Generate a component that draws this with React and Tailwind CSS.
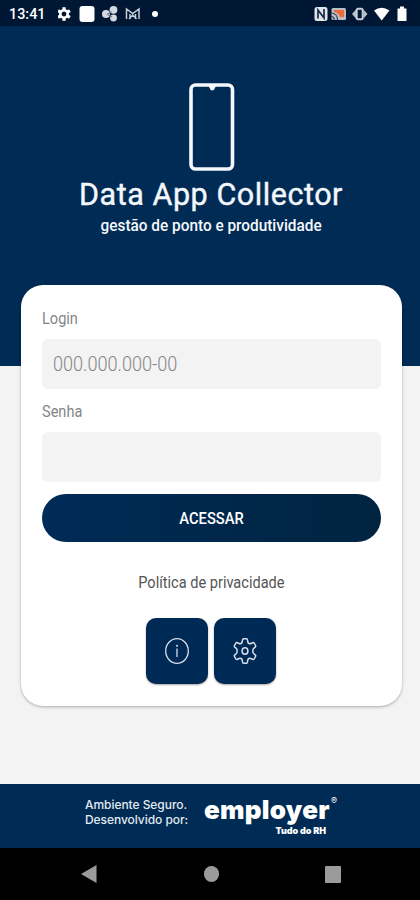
import { useState } from 'react';

function StatusBar() {
  return (
    <div className="flex h-[26px] items-center bg-[#001733] pl-[9px] text-white">
      <span className="w-[49px] origin-left translate-y-px scale-x-[0.96] text-[15px] leading-none font-medium">13:41</span>
      <svg className="h-[26px] w-[110px]" viewBox="0 0 110 26">
        <g transform="translate(6 14)" fill="#fff">
          <circle r="3.700" fill="none" stroke="#fff" strokeWidth="2.6" />
          {[0, 60, 120, 180, 240, 300].map((angle) => (
            <rect key={angle} x="-1.6" y="-6.800" width="3.200" height="3" transform={`rotate(${angle})`} />
          ))}
        </g>
        <rect x="21.5" y="6" width="15" height="16" rx="3" fill="#fff" />
        <g fill="#d3dae3">
          <circle cx="48" cy="14" r="4" />
          <circle cx="55.5" cy="9.8" r="3.9" />
          <circle cx="55.5" cy="18" r="3.4" />
        </g>
        <path d="M49 14.500l4.500-3M50 15l4 2" fill="none" stroke="#6e7c91" strokeWidth="1.3" />
        <path d="M68.500 19V9l6.200 4.500L81 9v10M71 19l3.700-4 3.800 4M72 14v5M77.500 14v5" fill="none" stroke="#c4ccd6" strokeWidth="1.5" />
        <circle cx="97" cy="14" r="3" fill="#fff" />
      </svg>
      <svg className="ml-auto h-[26px] w-[110px]" viewBox="310 0 110 26">
        <rect x="314.500" y="7" width="13" height="14" rx="2.500" fill="#dfe4ea" />
        <path d="M318 18.500V10L324 18V9" fill="none" stroke="#15294a" strokeWidth="1.700" />
        <rect x="331.500" y="8" width="14.500" height="12" rx="1.500" fill="#b9bec6" />
        <path d="M334 10h10v7h-4c-1-3-3-4.500-6-5z" fill="#f06a35" />
        <path d="M331 13c4 0 6.500 3 6.500 7M331 16.500c2 0 3.200 1.500 3.200 3.500" fill="none" stroke="#354158" strokeWidth="1.200" />
        <path d="M352 14l4-4.500v9zM367.500 14l-4-4.500v9z" fill="#b9c2cd" />
        <rect x="356.700" y="8.800" width="6" height="10.400" rx="1.500" fill="#001733" stroke="#c6cdd6" strokeWidth="2" />
        <path d="M374 10.500Q381.500 5 389.500 10.500L381.700 20.500z" fill="#fff" />
        <path d="M397.500 8.500h2.500V6.500h4v2h2.500V21h-9z" fill="#fff" />
      </svg>
    </div>
  );
}

function Brand() {
  return (
    <div className="flex flex-col items-center pl-[2px] text-[#f4f8fc]">
      <svg className="mt-[56px] h-[90px] w-[48px]" viewBox="0 0 48 90">
        <rect x="4" y="3" width="41.500" height="84" rx="4.500" fill="none" stroke="currentColor" strokeWidth="3.600" />
        <path d="M21.500 4h7.500l-2 3.800q-1.700 1.600-3.400 0z" fill="currentColor" />
      </svg>
      <h1 className="mt-[5px] text-[30.500px] leading-9 tracking-[0.55px] whitespace-nowrap [-webkit-text-stroke:0.4px_#f4f8fc]">Data App Collector</h1>
      <p className="mt-[3px] scale-x-[0.96] pl-px text-[16px] leading-5 font-medium whitespace-nowrap">gestão de ponto e produtividade</p>
    </div>
  );
}

function Field({ label, ...props }) {
  return (
    <label className="block">
      <span className="block h-[21px] origin-left scale-x-[0.91] text-[16px] leading-[21px] text-[#858585]">{label}</span>
      <span className="mt-[10px] block h-[50px] rounded-[6px] bg-[#f3f3f3] px-[11px]">
        <input
          {...props}
          className="h-full w-full origin-left scale-x-[0.905] bg-transparent text-[20px] font-light text-[#555] outline-none placeholder:text-[#858585]"
        />
      </span>
    </label>
  );
}

function InfoIcon() {
  return (
    <svg className="h-[28px] w-[26px]" viewBox="0 0 26 28" fill="none" stroke="#d5deea" strokeWidth="1.3">
      <ellipse cx="13" cy="14" rx="11.300" ry="12.300" />
      <path d="M13 11.500v8.500" />
      <circle cx="13" cy="8.800" r=".4" fill="#d5deea" />
    </svg>
  );
}

function GearIcon() {
  return (
    <svg className="h-[28px] w-[26px]" viewBox="0 0 26 28" fill="none" stroke="#d5deea" strokeWidth="1.500" strokeLinejoin="round">
      <path d="M11.600 1.800h2.800q1 0 1.100 1.200l.3 2q.2 1 1.200 1.500t1.900 0l1.700-.8q1-.4 1.600.5l1.300 2.300q.5.900-.3 1.600l-1.600 1.400q-.8.800-.8 2.500t.8 2.500l1.600 1.400q.8.700.3 1.600l-1.300 2.300q-.6.900-1.600.5l-1.700-.8q-.9-.5-1.900 0t-1.200 1.500l-.3 2q-.1 1.200-1.100 1.200h-2.800q-1 0-1.100-1.200l-.3-2q-.2-1-1.200-1.500t-1.900 0l-1.700.8q-1 .4-1.600-.5l-1.300-2.300q-.5-.9.300-1.600l1.600-1.400q.8-.8.800-2.500t-.8-2.500l-1.600-1.400q-.8-.7-.3-1.600l1.300-2.300q.6-.9 1.600-.5l1.700.8q.9.500 1.900 0t1.200-1.500l.3-2q.1-1.200 1.100-1.200z" />
      <ellipse cx="13" cy="14" rx="2.900" ry="3.200" />
    </svg>
  );
}

function LoginCard() {
  const [login, setLogin] = useState('');
  const [password, setPassword] = useState('');

  return (
    <form
      onSubmit={(event) => event.preventDefault()}
      className="mr-[18px] ml-[21px] h-[421px] rounded-[22px] bg-white pr-[21px] pl-[20.500px] pt-[23.500px] shadow-[0_1px_3px_rgba(0,0,0,0.3)]"
    >
      <Field label="Login" placeholder="000.000.000-00" value={login} onChange={(e) => setLogin(e.target.value)} />
      <div className="mt-3">
        <Field label="Senha" type="password" value={password} onChange={(e) => setPassword(e.target.value)} />
      </div>
      <button
        type="submit"
        className="mt-[12px] flex h-[48px] w-full items-center justify-center rounded-full bg-gradient-to-r from-[#002b57] to-[#002440] pt-[2px] text-[16px] font-medium text-white"
      >
        <span className="translate-x-[0.500px] scale-x-[0.92]">ACESSAR</span>
      </button>
      <a href="#privacidade" className="mt-[30px] block text-center text-[16px] leading-[21px] text-[#555]">
        <span className="inline-block scale-x-[0.91]">Política de privacidade</span>
      </a>
      <div className="mt-[25px] flex justify-center gap-[6px]">
        <button type="button" aria-label="Info" className="flex h-[66px] w-[62px] items-center justify-center rounded-[10px] bg-[#002a56] shadow-[0_1px_2px_rgba(0,0,0,0.35)]">
          <InfoIcon />
        </button>
        <button type="button" aria-label="Config" className="flex h-[66px] w-[62px] items-center justify-center rounded-[10px] bg-[#002a56] shadow-[0_1px_2px_rgba(0,0,0,0.35)]">
          <GearIcon />
        </button>
      </div>
    </form>
  );
}

function Footer() {
  return (
    <footer className="flex h-[64px] bg-[#002b54] pl-[85px] text-white">
      <p className="w-[119px] pt-[13px] font-[Inter] text-[12px] leading-[15px] font-medium tracking-[-0.05px] whitespace-nowrap text-[#e3eaf2]">
        Ambiente Seguro.
        <br />
        Desenvolvido por:
      </p>
      <div className="w-[127px] pt-[10px] whitespace-nowrap">
        <p className="font-[Inter] text-[26px] leading-[32px] font-black tracking-[0.25px]">employer</p>
        <p className="mt-[-1px] pr-[5px] text-right font-[Inter] text-[9px] leading-[11px] font-black">Tudo do RH</p>
      </div>
      <span className="pt-[12px] font-[Inter] text-[9px] leading-[10px]">®</span>
    </footer>
  );
}

function NavBar() {
  return (
    <nav className="flex h-[52px] items-center bg-black pl-[81px]">
      <svg className="h-[18px] w-[16px]" viewBox="0 0 16 18">
        <path d="M15.500 0v18L0 9z" fill="#9b9b9b" />
      </svg>
      <span className="ml-[107px] h-[16px] w-[15px] rounded-full bg-[#9b9b9b]" />
      <span className="ml-[106px] h-[17px] w-[16px] rounded-[1px] bg-[#9b9b9b]" />
    </nav>
  );
}

export default function App() {
  return (
    <div className="flex h-[900px] w-[420px] flex-col overflow-hidden bg-[#f3f3f3] font-[Roboto,sans-serif]">
      <StatusBar />
      <main className="flex-1 bg-[linear-gradient(#002b54_340px,#f3f3f3_340px)]">
        <Brand />
        <div className="mt-[48.500px]">
          <LoginCard />
        </div>
      </main>
      <Footer />
      <NavBar />
    </div>
  );
}
